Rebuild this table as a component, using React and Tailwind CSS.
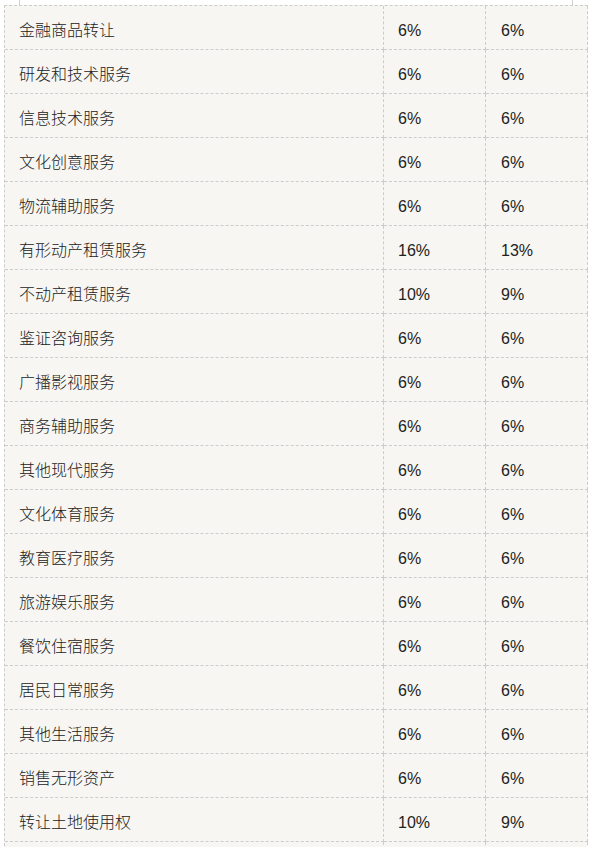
import React from "react";

const rows = [
  ["金融商品转让", "6%", "6%"],
  ["研发和技术服务", "6%", "6%"],
  ["信息技术服务", "6%", "6%"],
  ["文化创意服务", "6%", "6%"],
  ["物流辅助服务", "6%", "6%"],
  ["有形动产租赁服务", "16%", "13%"],
  ["不动产租赁服务", "10%", "9%"],
  ["鉴证咨询服务", "6%", "6%"],
  ["广播影视服务", "6%", "6%"],
  ["商务辅助服务", "6%", "6%"],
  ["其他现代服务", "6%", "6%"],
  ["文化体育服务", "6%", "6%"],
  ["教育医疗服务", "6%", "6%"],
  ["旅游娱乐服务", "6%", "6%"],
  ["餐饮住宿服务", "6%", "6%"],
  ["居民日常服务", "6%", "6%"],
  ["其他生活服务", "6%", "6%"],
  ["销售无形资产", "6%", "6%"],
  ["转让土地使用权", "10%", "9%"],
  ["", "", ""],
];

export default function App() {
  return (
    <div className="bg-white min-h-screen text-[#222]">
      <div className="h-[5px] pl-[19px]">
        <div className="h-full w-[554px] border-x border-[#cfcfcf]" />
      </div>
      <div className="ml-[4px] w-[584px] border-l border-t border-dashed border-[#cccccc] bg-[#f7f6f2]">
        {rows.map((r, i) => (
          <div key={i} className="flex h-[44px]">
            <div
              className="w-[379px] border-r border-b border-dashed border-[#cccccc] pl-[14px] pt-[2px] flex items-center text-[16px] font-light"
              style={{ fontFamily: '"Noto Sans CJK SC", sans-serif' }}
            >
              <span className="leading-none">{r[0]}</span>
            </div>
            <div
              className="w-[102px] border-r border-b border-dashed border-[#cccccc] pl-[14px] pt-[7px] flex items-center text-[16px]"
              style={{ fontFamily: '"Liberation Sans", Arial, sans-serif' }}
            >
              <span className="leading-none">{r[1]}</span>
            </div>
            <div
              className="w-[102px] border-r border-b border-dashed border-[#cccccc] pl-[15px] pt-[7px] flex items-center text-[16px]"
              style={{ fontFamily: '"Liberation Sans", Arial, sans-serif' }}
            >
              <span className="leading-none">{r[2]}</span>
            </div>
          </div>
        ))}
      </div>
    </div>
  );
}
